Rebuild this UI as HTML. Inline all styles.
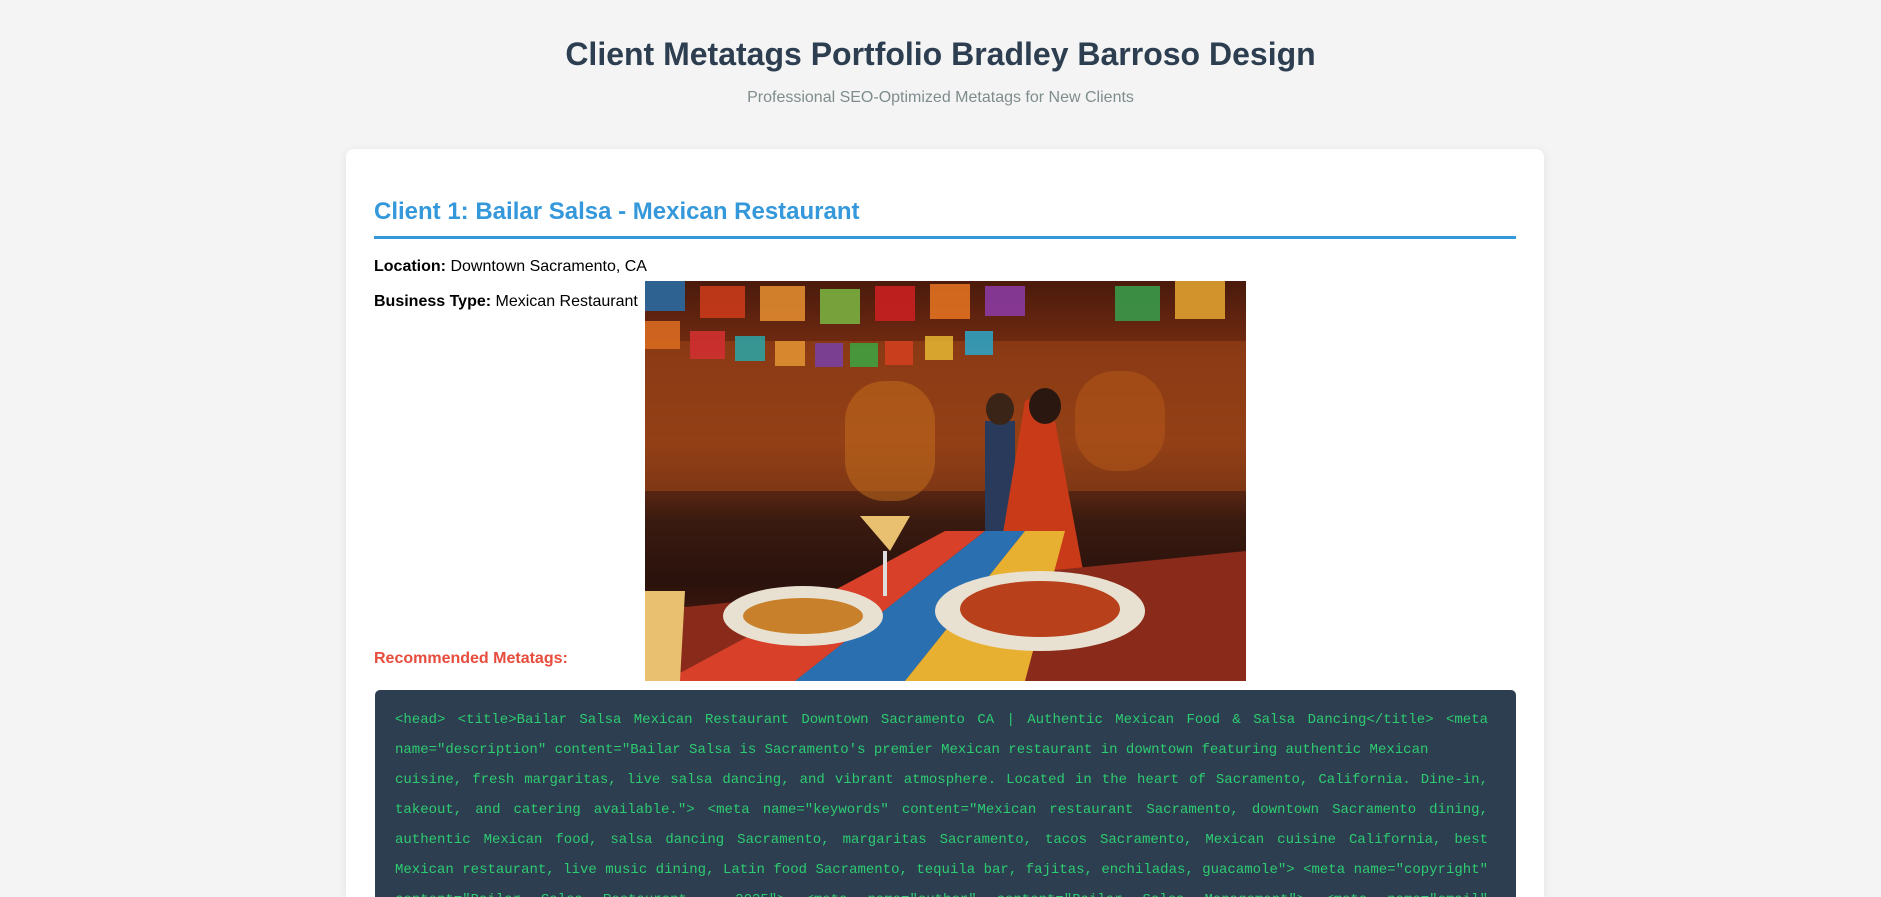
<!DOCTYPE html>
<html><head><meta charset="utf-8"><style>
html,body{margin:0;padding:0;width:1881px;height:897px;overflow:hidden;background:#f4f4f4;font-family:"Liberation Sans",Arial,sans-serif;}
h1{position:absolute;left:0;width:1881px;top:34px;margin:0;text-align:center;font-size:32px;line-height:40px;color:#2c3e50;font-weight:bold;}
.sub{position:absolute;left:0;width:1881px;top:88px;text-align:center;font-size:16px;line-height:20px;color:#7f8c8d;}
.card{position:absolute;left:346px;top:149px;width:1198px;height:748px;background:#fff;border-radius:8px 8px 0 0;box-shadow:0 2px 10px rgba(0,0,0,0.08);overflow:hidden;}
h2{position:absolute;left:28px;top:47px;margin:0;font-size:24px;line-height:32px;color:#3498db;font-weight:bold;}
.rule{position:absolute;left:28px;top:87px;width:1142px;height:3px;background:#3498db;}
.p{position:absolute;left:28px;font-size:16px;line-height:20px;color:#000;}
.rec{position:absolute;left:28px;top:500px;font-size:16px;line-height:20px;color:#e74c3c;font-weight:bold;}
.img{position:absolute;left:299px;top:132px;width:601px;height:400px;overflow:hidden;background:linear-gradient(180deg,#4a1a0c 0%,#7a2e12 20%,#8a3a14 40%,#3a1a10 60%,#2a120c 75%,#5a1e10 100%);}
.code{position:absolute;left:29px;top:541px;width:1121px;height:400px;padding:15px 0 15px 20px;background:#2c3e50;border-radius:5px;color:#2ecc71;font-family:"Liberation Mono",monospace;font-size:14px;line-height:30px;overflow:hidden;}
.code div{width:1093px;text-align:justify;text-align-last:justify;white-space:normal;}
.code div.l{text-align:left;text-align-last:left;white-space:nowrap;}
</style></head><body>
<h1>Client Metatags Portfolio Bradley Barroso Design</h1>
<div class="sub">Professional SEO-Optimized Metatags for New Clients</div>
<div class="card">
<h2>Client 1: Bailar Salsa - Mexican Restaurant</h2>
<div class="rule"></div>
<div class="p" style="top:108px"><b>Location:</b> Downtown Sacramento, CA</div>
<div class="p" style="top:143px"><b>Business Type:</b> Mexican Restaurant</div>
<div class="img">
<svg width="601" height="400" viewBox="0 0 601 400">
<rect x="0" y="60" width="601" height="150" fill="#9a4418" opacity="0.6"/>
<rect x="200" y="100" width="90" height="120" rx="40" fill="#c8701e" opacity="0.5"/>
<rect x="430" y="90" width="90" height="100" rx="40" fill="#b85a1a" opacity="0.5"/>
<g opacity="0.9">
<rect x="0" y="0" width="40" height="30" fill="#2a6aa0"/><rect x="55" y="5" width="45" height="32" fill="#c83a1a"/><rect x="115" y="5" width="45" height="35" fill="#e08a30"/><rect x="175" y="8" width="40" height="35" fill="#7ab040"/><rect x="230" y="5" width="40" height="35" fill="#c82020"/><rect x="285" y="3" width="40" height="35" fill="#e07020"/><rect x="340" y="5" width="40" height="30" fill="#8a3aa0"/><rect x="470" y="5" width="45" height="35" fill="#3a9a4a"/><rect x="530" y="0" width="50" height="38" fill="#e0a030"/>
<rect x="0" y="40" width="35" height="28" fill="#d86a20"/><rect x="45" y="50" width="35" height="28" fill="#d03030"/><rect x="90" y="55" width="30" height="25" fill="#30a0a0"/><rect x="130" y="60" width="30" height="25" fill="#e09030"/><rect x="170" y="62" width="28" height="24" fill="#7a40a0"/><rect x="205" y="62" width="28" height="24" fill="#40a040"/><rect x="240" y="60" width="28" height="24" fill="#d04020"/><rect x="280" y="55" width="28" height="24" fill="#e0b030"/><rect x="320" y="50" width="28" height="24" fill="#30a0c0"/>
</g>
<rect x="340" y="140" width="30" height="150" fill="#2a3a5a"/>
<ellipse cx="355" cy="128" rx="14" ry="16" fill="#3a2418"/>
<path d="M380 120 Q400 110 410 140 L440 300 L350 300 Z" fill="#c83a18"/>
<ellipse cx="400" cy="125" rx="16" ry="18" fill="#2a1810"/>
<path d="M0 330 L601 270 L601 400 L0 400 Z" fill="#8a2a1a"/>
<path d="M20 400 L300 250 L340 250 L150 400 Z" fill="#d8402a"/>
<path d="M150 400 L340 250 L380 250 L260 400 Z" fill="#2a70b0"/>
<path d="M260 400 L380 250 L420 250 L380 400 Z" fill="#e8b030"/>
<ellipse cx="158" cy="335" rx="80" ry="30" fill="#e8e0d0"/>
<ellipse cx="158" cy="335" rx="60" ry="18" fill="#c8802a"/>
<ellipse cx="395" cy="330" rx="105" ry="40" fill="#e8e0d0"/>
<ellipse cx="395" cy="328" rx="80" ry="28" fill="#b8401a"/>
<path d="M215 235 L265 235 L245 270 Z" fill="#e8c070"/><rect x="238" y="270" width="4" height="45" fill="#ddd"/>
<path d="M0 310 L40 310 L35 400 L0 400 Z" fill="#e8c070"/>
</svg>
</div>
<div class="rec">Recommended Metatags:</div>
<div class="code"><div>&lt;head&gt; &lt;title&gt;Bailar Salsa Mexican Restaurant Downtown Sacramento CA | Authentic Mexican Food &amp; Salsa Dancing&lt;/title&gt; &lt;meta</div><div class="l">name="description" content="Bailar Salsa is Sacramento's premier Mexican restaurant in downtown featuring authentic Mexican</div><div>cuisine, fresh margaritas, live salsa dancing, and vibrant atmosphere. Located in the heart of Sacramento, California. Dine-in,</div><div>takeout, and catering available."&gt; &lt;meta name="keywords" content="Mexican restaurant Sacramento, downtown Sacramento dining,</div><div>authentic Mexican food, salsa dancing Sacramento, margaritas Sacramento, tacos Sacramento, Mexican cuisine California, best</div><div>Mexican restaurant, live music dining, Latin food Sacramento, tequila bar, fajitas, enchiladas, guacamole"&gt; &lt;meta name="copyright"</div><div>content="Bailar Salsa Restaurant - 2025"&gt; &lt;meta name="author" content="Bailar Salsa Management"&gt; &lt;meta name="email"</div><div class="l">content="info@bailarsalsa.com"&gt; &lt;meta name="geo.region" content="US-CA"&gt; &lt;meta name="geo.placename" content="Sacramento"&gt; &lt;meta</div></div>
</div>
</body></html>
